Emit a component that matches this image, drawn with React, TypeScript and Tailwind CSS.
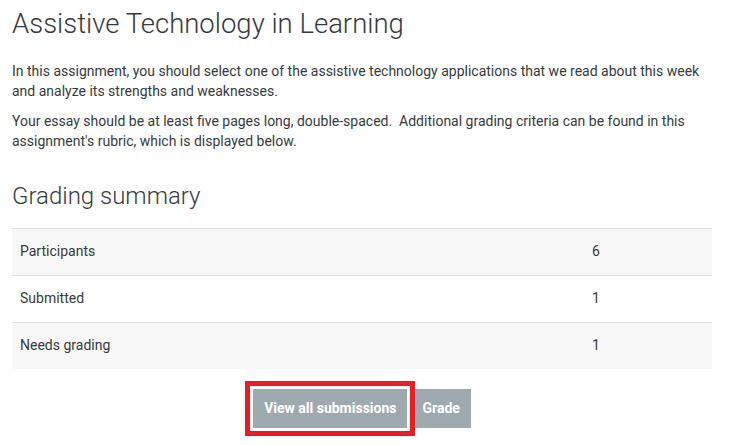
import React from "react";

const rows = [
  { label: "Participants", value: "6" },
  { label: "Submitted", value: "1" },
  { label: "Needs grading", value: "1" },
];

/* ---------- MAIN PAGE ---------- */

const App = () => {
  return (
    <div className="w-[737px] h-[445px] overflow-hidden bg-white px-[12px] font-['Roboto','Liberation_Sans',sans-serif] text-[#373a3c]">
      <h2 className="pt-[7px] text-[27.5px] font-light leading-[1.2]">Assistive Technology in Learning</h2>

      {/* Intro */}
      <div className="mt-[21px] text-[14px] leading-[20px] whitespace-nowrap">
        <p className="mb-[10px]">
          In this assignment, you should select one of the assistive technology applications that we read about this week
          <br />
          and analyze its strengths and weaknesses.
        </p>
        <p>
          Your essay should be at least five pages long, double-spaced.&nbsp; Additional grading criteria can be found in this
          <br />
          assignment's rubric, which is displayed below.
        </p>
      </div>

      <h3 className="mt-[31px] text-[24px] font-light leading-[1.2]">Grading summary</h3>

      {/* Summary table */}
      <div className="mt-[17px] w-[700px] text-[14px]">
        {rows.map((row, i) => (
          <div
            key={row.label}
            className={`flex h-[47px] items-center border-t border-[#dee2e6] ${i % 2 === 0 ? "bg-[#f8f8f8]" : "bg-white"}`}
          >
            <div className="w-[572px] px-[8px]">{row.label}</div>
            <div className="px-[8px]">{row.value}</div>
          </div>
        ))}
      </div>

      {/* Actions */}
      <div className="mt-[20px] flex w-[700px] justify-center gap-[4px]">
        <div className="relative">
          <button className="h-[39px] bg-[#9faab0] px-[11px] text-[14px] font-bold text-white">View all submissions</button>
          <div className="pointer-events-none absolute -inset-[8px] z-10 border-[5px] border-[#ec1c24] shadow-[inset_0_0_0_3px_#fff]" />
        </div>
        <button className="h-[39px] bg-[#9faab0] px-[11px] text-[14px] font-bold text-white">Grade</button>
      </div>
    </div>
  );
};

export default App;
